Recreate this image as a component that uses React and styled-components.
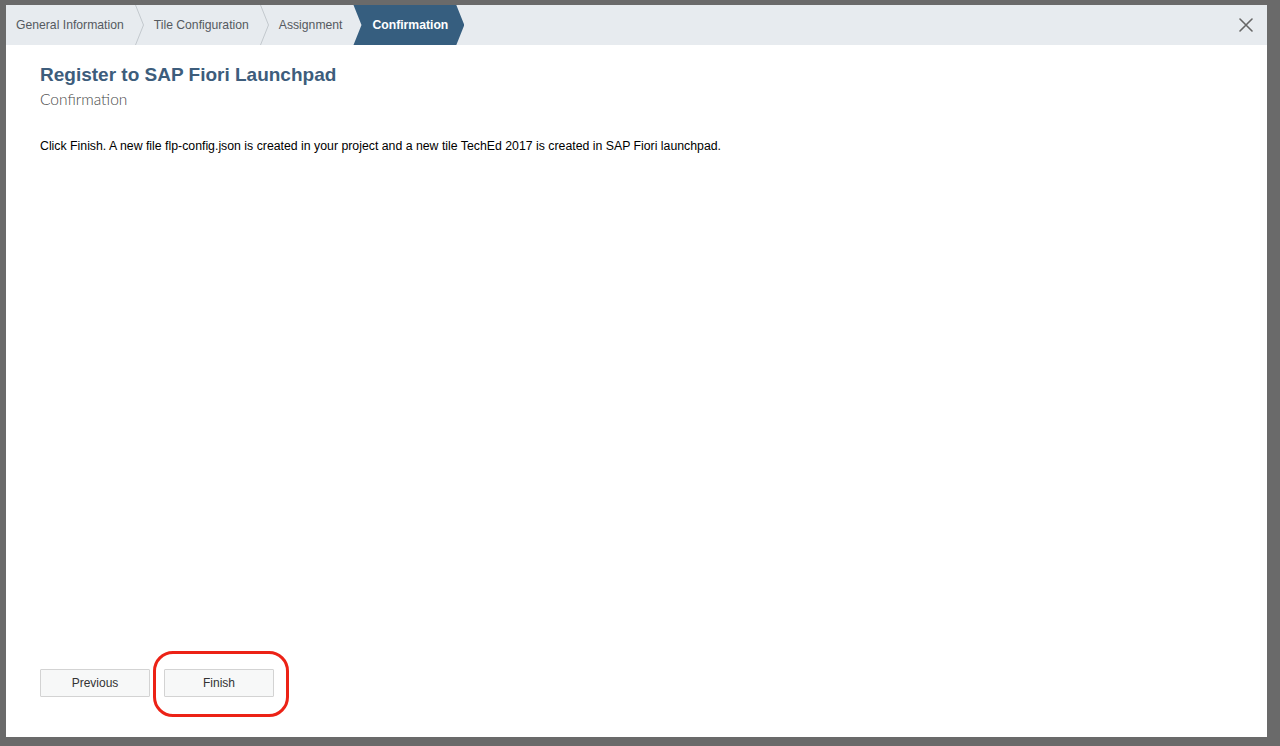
import styled, { createGlobalStyle } from 'styled-components';

const GlobalStyle = createGlobalStyle`
  html, body {
    margin: 0;
    padding: 0;
    font-family: "Liberation Sans", Arial, sans-serif;
  }
`;

const steps = ['General Information', 'Tile Configuration', 'Assignment', 'Confirmation'];

export default function App() {
  return (
    <>
      <GlobalStyle />
      <Backdrop>
        <Dialog>
          <Header>
            <Steps>
              {steps.map((s, i) => {
                const active = i === steps.length - 1;
                const nextActive = i === steps.length - 2;
                return (
                  <StepItem key={s}>
                    <Step $active={active}>{s}</Step>
                    {!active && !nextActive && (
                      <Chevron width="9" height="40" viewBox="0 0 9 40">
                        <polyline points="0.5,0 8.5,20 0.5,40" fill="none" stroke="#c4c9ce" strokeWidth="1" />
                      </Chevron>
                    )}
                  </StepItem>
                );
              })}
            </Steps>
            <CloseButton aria-label="Close">
              <svg width="14" height="14" viewBox="0 0 14 14">
                <path d="M1 1 L13 13 M13 1 L1 13" stroke="#666" strokeWidth="1.6" strokeLinecap="round" />
              </svg>
            </CloseButton>
          </Header>
          <Body>
            <Title>Register to SAP Fiori Launchpad</Title>
            <Subtitle>Confirmation</Subtitle>
            <Text>
              Click Finish. A new file flp-config.json is created in your project and a new tile TechEd 2017 is
              created in SAP Fiori launchpad.
            </Text>
          </Body>
          <Footer>
            <Button>Previous</Button>
            <Highlighted>
              <Button>Finish</Button>
              <RedRing />
            </Highlighted>
          </Footer>
        </Dialog>
      </Backdrop>
    </>
  );
}

const Backdrop = styled.div`
  box-sizing: border-box;
  height: 746px;
  padding: 5px 13px 9px 6px;
  background: #6a6a6a;
  display: flex;
`;

const Dialog = styled.div`
  flex: 1;
  display: flex;
  flex-direction: column;
  background: #ffffff;
`;

const Header = styled.div`
  height: 40px;
  display: flex;
  align-items: center;
  justify-content: space-between;
  background: #e7ebef;
`;

const Steps = styled.div`
  display: flex;
  align-items: stretch;
  height: 100%;
`;

const StepItem = styled.div`
  display: flex;
  align-items: stretch;
`;

const Step = styled.div`
  display: flex;
  align-items: center;
  font-size: 12.2px;
  color: ${(p) => (p.$active ? '#ffffff' : '#555a60')};
  font-weight: ${(p) => (p.$active ? 'bold' : 'normal')};
  background: ${(p) => (p.$active ? '#365e7f' : 'transparent')};
  padding: ${(p) => (p.$active ? '0 16px 0 19px' : '0 11px 0 10px')};
  clip-path: ${(p) =>
    p.$active
      ? 'polygon(0 0, calc(100% - 8px) 0, 100% 50%, calc(100% - 8px) 100%, 0 100%, 8px 50%)'
      : 'none'};
  white-space: nowrap;
`;

const Chevron = styled.svg`
  display: block;
  flex: none;
`;

const CloseButton = styled.button`
  background: none;
  border: none;
  padding: 0;
  margin-right: 14px;
  width: 14px;
  height: 14px;
  display: flex;
  cursor: pointer;
`;

const Body = styled.div`
  flex: 1;
  padding: 19px 34px 0;
`;

const Title = styled.h1`
  margin: 0;
  font-size: 19px;
  font-weight: bold;
  color: #3d5d7c;
  line-height: 22px;
`;

const Subtitle = styled.h2`
  margin: 3px 0 0;
  font-family: Lato, "Liberation Sans", sans-serif;
  font-weight: 300;
  font-size: 15.5px;
  color: #4a4a4a;
  line-height: 20px;
`;

const Text = styled.p`
  margin: 29px 0 0;
  font-size: 12.3px;
  color: #000;
  line-height: 16px;
`;

const Footer = styled.div`
  display: flex;
  gap: 14px;
  padding: 0 34px 40px;
`;

const Button = styled.button`
  width: 110px;
  height: 28px;
  border: 1px solid #d3d3d3;
  background: #f7f8f8;
  color: #333;
  font-family: "Liberation Sans", Arial, sans-serif;
  font-size: 12px;
  border-radius: 1px;
  cursor: pointer;
`;

const Highlighted = styled.div`
  position: relative;
  display: flex;
`;

const RedRing = styled.div`
  position: absolute;
  left: -11px;
  top: -18px;
  right: -15px;
  bottom: -20px;
  border: 3px solid #ec2216;
  border-radius: 20px;
  pointer-events: none;
`;
